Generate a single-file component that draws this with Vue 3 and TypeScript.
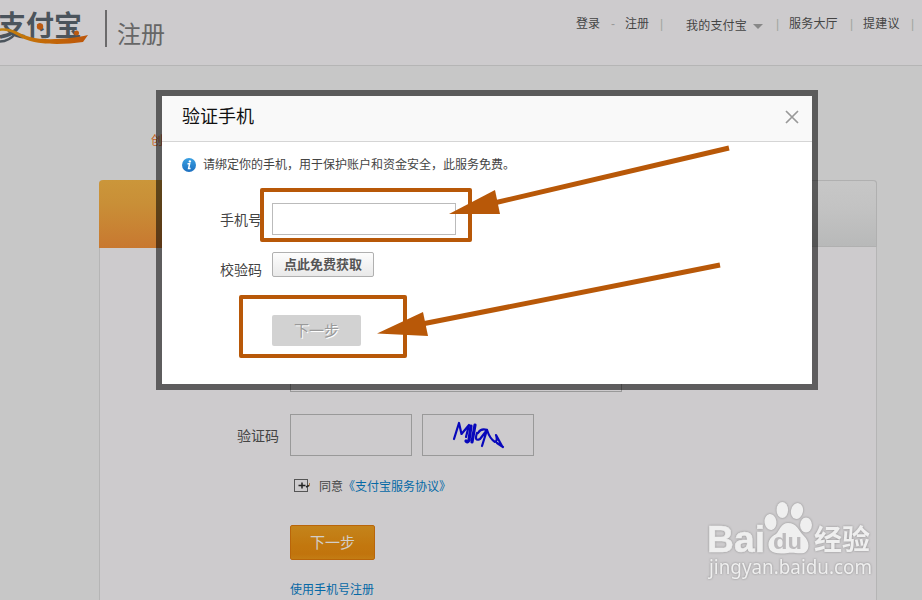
<script setup lang="ts">
import { ref } from 'vue'

interface NavItem {
  label: string
  cls: string
  caret?: boolean
}

const navItems: NavItem[] = [
  { label: '登录', cls: 'login' },
  { label: '-', cls: 'dash' },
  { label: '注册', cls: 'register' },
  { label: '|', cls: 'bar bar-a' },
  { label: '我的支付宝', cls: 'mine', caret: true },
  { label: '|', cls: 'bar bar-b' },
  { label: '服务大厅', cls: 'hall' },
  { label: '|', cls: 'bar bar-c' },
  { label: '提建议', cls: 'advice' },
  { label: '|', cls: 'bar bar-d' },
]

const phone = ref('')
const captcha = ref('')
</script>

<template>
  <div class="page">
    <header class="header">
      <svg class="logo" width="90" height="50" viewBox="0 0 90 50">
        <defs>
          <linearGradient id="swoosh" x1="0" x2="1" y1="0" y2="0">
            <stop offset="0" stop-color="#c48410" />
            <stop offset="0.45" stop-color="#c46c08" />
            <stop offset="1" stop-color="#bd560a" />
          </linearGradient>
        </defs>
        <text class="logo-text" x="-2" y="36" textLength="84" lengthAdjust="spacingAndGlyphs">支付宝</text>
        <path d="M0 41.500 Q9 41.500 16 33" fill="none" stroke="#4b545c" stroke-width="2.500" />
        <path d="M0 28.500 C13 27 18 34 30 37 C45 41 70 39 88 35 L83 42 C62 45 38 45 23 38.500 C13 33 9 30 0 31 Z" fill="url(#swoosh)" />
        <circle cx="40" cy="26.500" r="3.200" fill="#bd5a10" />
        <circle cx="76.500" cy="33" r="2.500" fill="#bd5a10" />
      </svg>
      <span class="logo-rule"></span>
      <span class="logo-sub">注册</span>
      <nav class="nav">
        <span v-for="(item, i) in navItems" :key="i" :class="item.cls">
          {{ item.label }}<i v-if="item.caret" class="caret"></i>
        </span>
      </nav>
    </header>

    <main class="main">
      <p class="crumb">创</p>
      <section class="panel">
        <div class="tabs">
          <div class="tab active"></div>
          <div class="tab"></div>
        </div>
        <form class="account" @submit.prevent>
          <div class="long-input"></div>
          <div class="row">
            <label class="label">验证码</label>
            <input v-model="captcha" class="captcha-input" />
            <div class="captcha">
              <svg width="60" height="34" viewBox="0 0 60 34">
                <g fill="none" stroke="#0808bb" stroke-width="2.200" stroke-linecap="round" stroke-linejoin="round">
                  <path d="M4 21 L9 5 L11.500 16 L19 7 L16 19" />
                  <path d="M21 8 L19 22 Q18 25 16 23 M25 7 L22 24" stroke-width="3.200" />
                  <path d="M27 15 Q24 24 30 21 L37 12 Q31 10 28 15 M37 12 L32 28" />
                  <path d="M37 12 Q40 21 45 24 Q48 23 46 17 L52 28 M47 25 L53 29" />
                </g>
              </svg>
            </div>
          </div>
          <div class="agree">
            <svg class="check" width="18" height="14" viewBox="0 0 18 14">
              <rect x=".5" y=".5" width="13" height="12" fill="none" stroke="#555" />
              <path d="M4.500 6.500H11.500M8 3.500V9.500" stroke="#222" stroke-width="1.500" />
              <path d="M12 8L15 6.500" stroke="#222" stroke-width="1.500" />
              <path d="M15.500 4V7" stroke="#a97b46" />
            </svg>
            <span>同意</span><a class="link">《支付宝服务协议》</a>
          </div>
          <button class="next">下一步</button>
          <a class="link alt">使用手机号注册</a>
        </form>
      </section>
    </main>

    <div class="modal">
      <div class="dialog">
        <div class="dialog-head">
          <h2>验证手机</h2>
          <svg width="14" height="14" viewBox="0 0 14 14">
            <path d="M1 1L13 13M13 1L1 13" stroke="#999" stroke-width="1.700" />
          </svg>
        </div>
        <div class="tip">
          <svg width="14" height="14" viewBox="0 0 14 14">
            <defs>
              <linearGradient id="info" x1="0" x2="0" y1="0" y2="1">
                <stop offset="0" stop-color="#3aa0e2" />
                <stop offset="1" stop-color="#1c6fc0" />
              </linearGradient>
            </defs>
            <circle cx="7" cy="7" r="7" fill="url(#info)" />
            <circle cx="7.900" cy="3.400" r="1.200" fill="#fff" />
            <path d="M5.500 5.800H7.600L6.600 10.500H8.600" fill="none" stroke="#fff" stroke-width="1.500" />
          </svg>
          <span>请绑定你的手机，用于保护账户和资金安全，此服务免费。</span>
        </div>
        <div class="field phone">
          <label>手机号</label>
          <input v-model="phone" />
        </div>
        <div class="field code">
          <label>校验码</label>
          <button class="get-code">点此免费获取</button>
        </div>
        <button class="disabled">下一步</button>
      </div>
    </div>

    <svg class="marks" width="922" height="600" viewBox="0 0 922 600">
      <g fill="none" stroke="#b85808" stroke-width="4" stroke-linejoin="round">
        <rect x="262" y="190" width="208" height="50" />
        <rect x="241" y="297" width="164" height="59" />
      </g>
      <g stroke="#b85808" stroke-width="5">
        <path d="M729 148L494 203" />
        <path d="M720 265L422 324" />
      </g>
      <g fill="#b85808">
        <path d="M449 214L495 190L500 214Z" />
        <path d="M377 333.500L423 312L428 336Z" />
      </g>
    </svg>

    <svg class="watermark" width="180" height="90" viewBox="0 0 180 90">
      <g class="mark-fill">
        <text class="bai" x="7" y="52" textLength="58" lengthAdjust="spacingAndGlyphs">Bai</text>
        <ellipse cx="70.500" cy="22" rx="6" ry="8" transform="rotate(-8 70.500 22)" />
        <ellipse cx="82.300" cy="10" rx="5.800" ry="8" />
        <ellipse cx="97" cy="11" rx="6" ry="8" transform="rotate(12 97 11)" />
        <ellipse cx="106" cy="25" rx="6" ry="7.500" />
        <path d="M88 23C97 23 98 30 104 36C110 42 110 50 104 53C98 54 93 52 88 53C81 54 74 54 70 50C66 43 70 37 76 34C80 30 81 23 88 23Z" />
        <text class="jy" x="114" y="50" textLength="56" lengthAdjust="spacingAndGlyphs">经验</text>
      </g>
      <text class="du" x="73" y="48.500" textLength="29" lengthAdjust="spacingAndGlyphs">du</text>
      <text class="site" x="9" y="74" textLength="163" lengthAdjust="spacingAndGlyphs">jingyan.baidu.com</text>
    </svg>
  </div>
</template>

<style>
body {
  margin: 0;
  overflow: hidden;
}
</style>

<style scoped>
* {
  box-sizing: border-box;
}
.page {
  position: relative;
  width: 922px;
  height: 600px;
  overflow: hidden;
  background: #c7c7c7;
  color: #444;
  font: 12px/16px "Liberation Sans", "Noto Sans CJK SC", sans-serif;
}
button,
input {
  font-family: inherit;
  padding: 0;
  margin: 0;
  border-radius: 0;
  background: transparent;
  outline: none;
}
.header {
  display: flex;
  align-items: flex-start;
  height: 66px;
  background: #cdcbcd;
  border-bottom: 1px solid #b5b5b5;
}
.logo {
  flex: none;
}
.logo-text {
  font: 700 28px "Noto Sans CJK SC", sans-serif;
  fill: #4b545c;
}
.logo-rule {
  width: 2px;
  height: 37px;
  margin: 10px 0 0 15px;
  background: #6b6a6b;
}
.logo-sub {
  margin: 20px 0 0 10px;
  font-size: 24px;
  line-height: 30px;
  color: #666;
}
.nav {
  display: flex;
  margin: 16px 0 0 411px;
  white-space: nowrap;
}
.nav > span {
  flex: none;
}
.nav .login {
  width: 35px;
}
.nav .dash {
  width: 14px;
  color: #999;
}
.nav .register {
  width: 35px;
}
.nav .bar {
  color: #a0a69f;
}
.nav .bar-a {
  width: 26px;
}
.nav .mine {
  display: flex;
  align-items: center;
  width: 90px;
  padding-top: 2px;
  letter-spacing: 0.2px;
}
.nav .bar-b {
  width: 13px;
}
.nav .hall {
  width: 61px;
  letter-spacing: 0.2px;
}
.nav .bar-c {
  width: 13px;
}
.nav .advice {
  width: 48px;
  letter-spacing: 0.2px;
}
.caret {
  margin-left: 6px;
  border: 5px solid transparent;
  border-top-color: #888;
  border-bottom: 0;
}
.main {
  padding: 67px 0 0 99px;
}
.crumb {
  width: 12px;
  height: 16px;
  margin: 0 0 31px 52px;
  color: #c6611c;
}
.panel {
  width: 778px;
  height: 440px;
  background: #cdcbcd;
  border: 1px solid #b5b5b5;
  border-top: 0;
  border-radius: 4px 4px 0 0;
}
.tabs {
  display: flex;
  margin: 0 -1px;
}
.tab {
  flex: 1;
  height: 67px;
  border: 1px solid #b0b0b0;
  border-left: 0;
  border-radius: 0 4px 0 0;
  background: linear-gradient(#c7c7c7, #c3c3c3 40%, #b8b9b9);
}
.tab.active {
  height: 68px;
  border: 0;
  border-radius: 4px 0 0;
  background: linear-gradient(#cb963a, #c98f37 35%, #c87830);
}
.account {
  display: flex;
  flex-direction: column;
  align-items: flex-start;
  padding: 102px 0 0 190px;
}
.long-input {
  width: 332px;
  height: 42px;
  border: 1px solid #999;
}
.row {
  display: flex;
  align-items: center;
  margin: 22px 0 0 -53px;
}
.label {
  width: 53px;
  padding-top: 2px;
  font-size: 14px;
}
.captcha-input,
.captcha {
  height: 42px;
  border: 1px solid #999;
}
.captcha-input {
  width: 122px;
  margin-right: 10px;
}
.captcha {
  width: 112px;
  padding: 3px 0 0 27px;
}
.agree {
  display: flex;
  align-items: center;
  height: 16px;
  margin: 22px 0 0 4px;
}
.agree span,
.agree .link {
  padding-top: 2px;
}
.check {
  margin-right: 7px;
}
.link {
  color: #0569a6;
}
.next {
  width: 85px;
  height: 35px;
  margin: 31px 0 0;
  border: 1px solid #b96509;
  border-radius: 2px;
  background: linear-gradient(#c4841b, #c2770e 60%, #c1740d 85%, #c37d14);
  color: #d3cec8;
  font-size: 15px;
  line-height: 33px;
}
.alt {
  margin-top: 22px;
}
.modal {
  position: absolute;
  left: 156px;
  top: 90px;
  width: 662px;
  height: 300px;
  padding: 6px;
  background: rgba(0, 0, 0, 0.54);
}
.dialog {
  height: 288px;
  background: #fff;
}
.dialog-head {
  display: flex;
  align-items: center;
  justify-content: space-between;
  height: 46px;
  padding: 0 13px 4px 20px;
  background: #f9f9f9;
  border-bottom: 1px solid #d5d5d5;
}
.dialog-head h2 {
  margin: 0;
  color: #111;
  font-size: 18px;
  line-height: 24px;
  font-weight: 400;
}
.tip {
  display: flex;
  align-items: center;
  height: 16px;
  margin: 15px 0 0 20px;
}
.tip span {
  margin-left: 7px;
}
.field {
  display: flex;
  margin-left: 58px;
}
.field label {
  width: 52px;
  font-size: 14px;
  line-height: 20px;
}
.phone {
  margin-top: 30px;
}
.phone label {
  padding-top: 7px;
}
.phone input {
  width: 184px;
  height: 32px;
  border: 1px solid #bbb;
}
.code {
  margin-top: 17px;
}
.code label {
  padding-top: 8px;
}
.get-code {
  width: 102px;
  height: 25px;
  border: 1px solid #b0b0b0;
  border-radius: 2px;
  background: linear-gradient(#fdfdfd, #e9e9e9);
  color: #555;
  font-size: 13px;
  line-height: 23px;
  font-weight: 700;
}
.disabled {
  display: block;
  width: 89px;
  height: 31px;
  margin: 35px 0 0 110px;
  border: 0;
  border-radius: 2px;
  background: #d2d2d2;
  color: #999;
  font-size: 15px;
  line-height: 31px;
  text-shadow: 1px 1px 0 #fff;
}
.marks {
  position: absolute;
  left: 0;
  top: 0;
  pointer-events: none;
}
.watermark {
  position: absolute;
  left: 700px;
  top: 500px;
  overflow: visible;
  pointer-events: none;
  filter: drop-shadow(0 0 1px rgba(90, 90, 90, 0.55));
}
.mark-fill {
  fill: #efefef;
}
.bai {
  font: 700 36px "Liberation Sans", sans-serif;
  stroke: #efefef;
  stroke-width: 0.5px;
}
.jy {
  font: 700 28px "Noto Sans CJK SC", sans-serif;
}
.du {
  font: 700 22px "Liberation Sans", sans-serif;
  fill: #bdbbbd;
}
.site {
  font: 19px "Noto Sans", sans-serif;
  fill: #efefef;
}
</style>
